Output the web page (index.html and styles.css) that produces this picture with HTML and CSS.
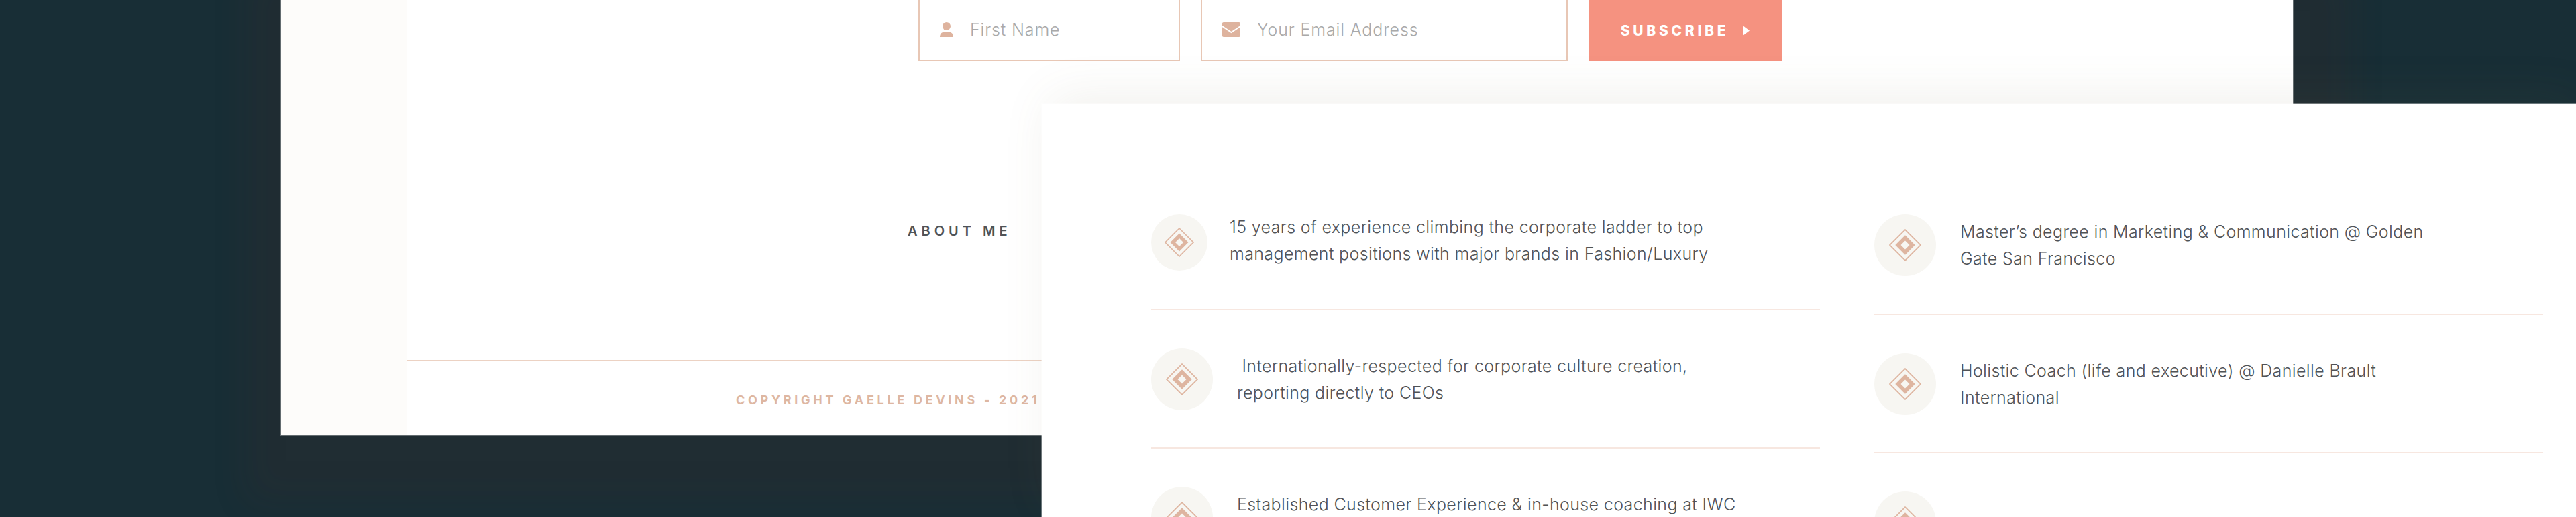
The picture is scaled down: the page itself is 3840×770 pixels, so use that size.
FILE: index.html
```html
<!DOCTYPE html>
<html lang="en">
<head>
  <meta charset="UTF-8" />
  <title>About me - Gaelle Devins</title>
  <link rel="stylesheet" href="styles.css">
</head>
<body>
  <svg class="defs" width="0" height="0">
    <symbol id="diamond" viewBox="0 0 44 44">
      <path d="M22 1 L43 22 L22 43 L1 22 Z" fill="none" stroke="#deb5a0" stroke-width="1.6" />
      <path fill-rule="evenodd" d="M22 8.5 L35.5 22 L22 35.5 L8.5 22 Z M22 16 L16 22 L22 28 L28 22 Z" fill="#deb5a0" />
    </symbol>
  </svg>

  <div class="page">
    <div class="page-main">
      <form class="signup">
        <div class="field field-name">
          <svg class="field-icon" width="20" height="22" viewBox="0 0 20 22">
            <circle cx="10" cy="6" r="6" fill="#deb39e" />
            <path d="M0 22 C0 16 4 14 10 14 C16 14 20 16 20 22 Z" fill="#deb39e" />
          </svg>
          <span class="placeholder">First Name</span>
        </div>
        <div class="field field-email">
          <svg class="field-icon" width="27" height="22" viewBox="0 0 27 22">
            <rect width="27" height="22" rx="2" fill="#deb39e" />
            <path d="M0 6 L13.5 15 L27 6" fill="none" stroke="#fff" stroke-width="2" />
          </svg>
          <span class="placeholder">Your Email Address</span>
        </div>
        <button class="subscribe" type="button">
          SUBSCRIBE
          <svg width="10" height="15" viewBox="0 0 10 15"><path d="M0 0 L10 7.5 L0 15 Z" fill="#fff" /></svg>
        </button>
      </form>
      <a class="about-link">ABOUT ME</a>
      <footer class="page-footer">COPYRIGHT GAELLE DEVINS - 2021</footer>
    </div>
  </div>

  <section class="card">
    <div class="col col-left">
      <div class="row row-small">
        <div class="badge badge-small"><svg><use href="#diamond" /></svg></div>
        <p class="row-text">15 years of experience climbing the corporate ladder to top<br>management positions with major brands in Fashion/Luxury</p>
      </div>
      <div class="row">
        <div class="badge"><svg><use href="#diamond" /></svg></div>
        <p class="row-text">&nbsp;Internationally-respected for corporate culture creation,<br>reporting directly to CEOs</p>
      </div>
      <div class="row">
        <div class="badge"><svg><use href="#diamond" /></svg></div>
        <p class="row-text">Established Customer Experience &amp; in-house coaching at IWC<br>&nbsp;</p>
      </div>
    </div>
    <div class="col col-right">
      <div class="row">
        <div class="badge"><svg><use href="#diamond" /></svg></div>
        <p class="row-text">Master’s degree in Marketing &amp; Communication @ Golden<br>Gate San Francisco</p>
      </div>
      <div class="row">
        <div class="badge"><svg><use href="#diamond" /></svg></div>
        <p class="row-text">Holistic Coach (life and executive) @ Danielle Brault<br>International</p>
      </div>
      <div class="row">
        <div class="badge"><svg><use href="#diamond" /></svg></div>
      </div>
    </div>
  </section>
</body>
</html>
```

FILE: styles.css
```css
html, body {
  margin: 0;
  padding: 0;
  height: 100%;
  overflow: hidden;
  background: #182e36;
  font-family: 'Inter', 'Liberation Sans', sans-serif;
}

.defs {
  position: absolute;
}

/* back window */
.page {
  position: absolute;
  left: 419px;
  top: -4px;
  width: 2999px;
  height: 652px;
  padding-left: 188px;
  box-sizing: border-box;
  background: #fdfcfa;
  box-shadow: 0 0 0 1px rgba(255,255,255,0.3), 17px 30px 50px 70px rgba(104,36,34,0.1);
}

.page-main {
  height: 100%;
  display: flex;
  flex-direction: column;
  background: #fff;
}

.signup {
  display: flex;
  gap: 31px;
  height: 95px;
  margin-left: 762px;
}

.field {
  display: flex;
  align-items: center;
  gap: 25px;
  padding-left: 30px;
  box-sizing: border-box;
  border: 2px solid #e8c7b5;
}

.field-name {
  width: 390px;
}

.field-email {
  width: 547px;
}

.placeholder {
  font-size: 25px;
  font-weight: 300;
  letter-spacing: 0.85px;
  color: #a9a9a9;
}

.subscribe {
  width: 288px;
  padding: 4px 0 0;
  display: flex;
  align-items: center;
  justify-content: center;
  gap: 21px;
  border: none;
  background: #f59280;
  color: #fff;
  font-family: inherit;
  font-size: 21px;
  font-weight: 800;
  letter-spacing: 4.7px;
}

.about-link {
  margin: 241px 0 0 746px;
  font-size: 20px;
  line-height: 24px;
  font-weight: 600;
  letter-spacing: 6px;
  color: #4f5357;
}

.page-footer {
  margin-top: auto;
  height: 112px;
  box-sizing: border-box;
  padding: 46px 0 0 490px;
  border-top: 2px solid #ecd2c3;
  font-size: 18px;
  line-height: 24px;
  font-weight: 700;
  letter-spacing: 4.7px;
  color: #deb7a2;
  white-space: nowrap;
}

/* front window */
.card {
  position: absolute;
  left: 1553px;
  top: 155px;
  width: 2287px;
  height: 615px;
  overflow: hidden;
  padding-left: 163px;
  box-sizing: border-box;
  display: flex;
  gap: 81px;
  background: #fff;
  box-shadow: 0 0 0 1px rgba(255,255,255,0.35), 10px -12px 70px -5px rgba(120,110,70,0.11);
}

.col {
  width: 997px;
  flex-shrink: 0;
}

.col-left {
  padding-top: 107px;
}

.col-right {
  padding-top: 107px;
}

.row {
  display: flex;
  align-items: center;
  gap: 36px;
  padding: 57px 0 55px;
  border-bottom: 2px solid #f7e7e0;
}

.col-right .row:first-child {
  padding-bottom: 56px;
}

.row-small {
  gap: 33px;
  padding-bottom: 57px;
}

.badge {
  width: 92px;
  height: 92px;
  flex-shrink: 0;
  display: flex;
  align-items: center;
  justify-content: center;
  border-radius: 50%;
  background: #f7f6f2;
}

.badge svg {
  width: 48px;
  height: 48px;
}

.badge-small {
  width: 84px;
  height: 84px;
}

.badge-small svg {
  width: 44px;
  height: 44px;
}

.row-text {
  margin: 0;
  font-size: 25px;
  line-height: 40px;
  font-weight: 300;
  letter-spacing: 0.37px;
  color: #505357;
  white-space: nowrap;
}

.row-small .row-text {
  margin-top: -6px;
}
```
